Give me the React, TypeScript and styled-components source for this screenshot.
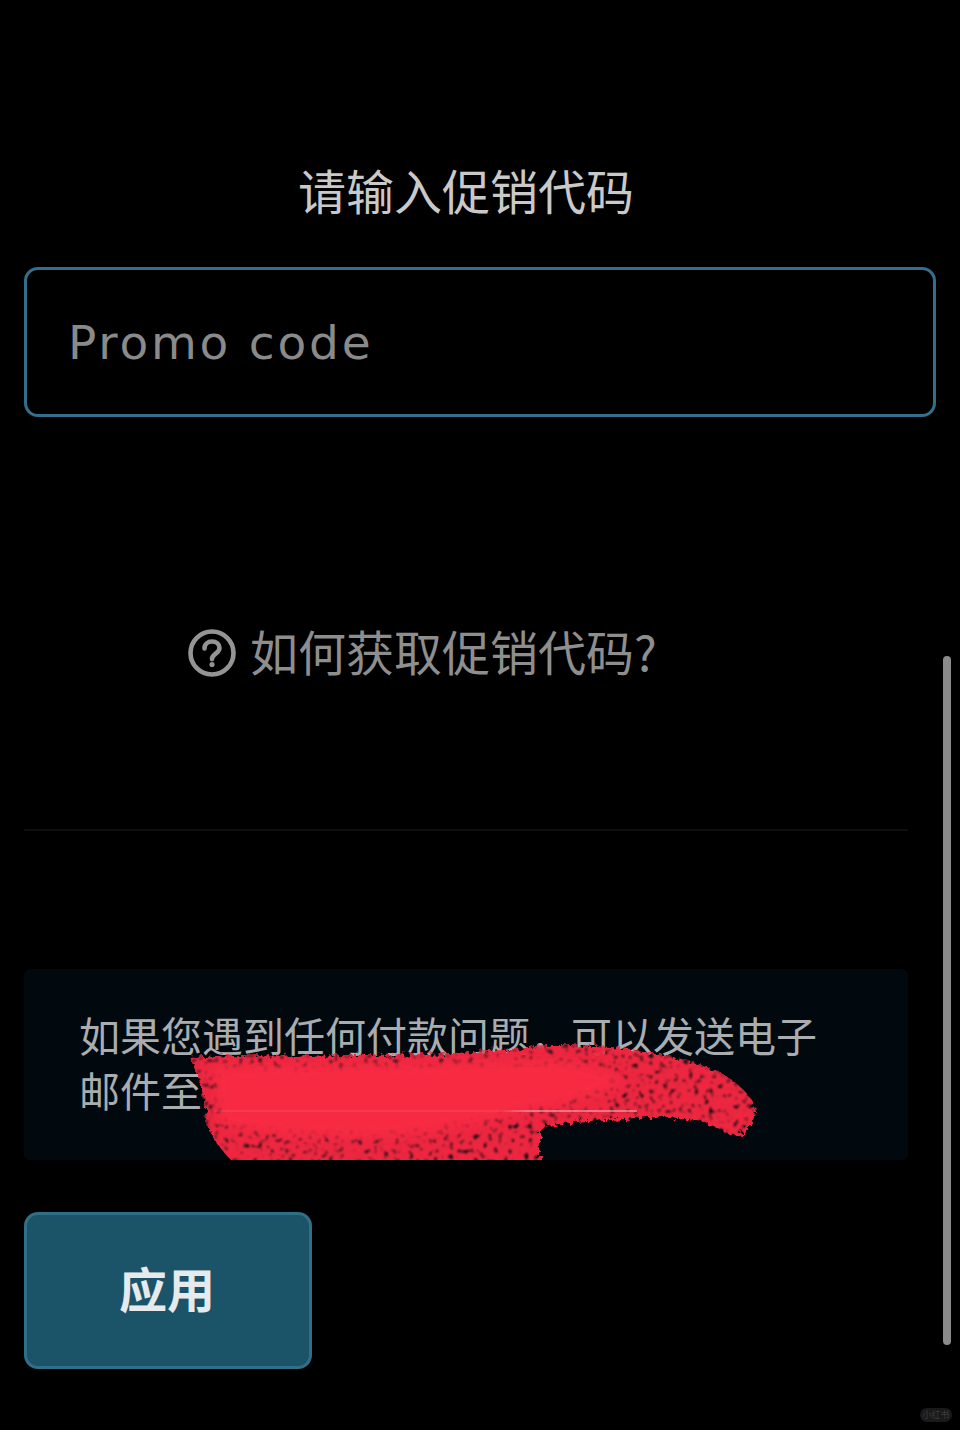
import React from 'react';
import styled, { createGlobalStyle } from 'styled-components';

const cjk = '"Noto Sans CJK SC", "Noto Sans", sans-serif';

const GlobalStyle = createGlobalStyle`
	html, body {
		margin: 0;
		background: #000;
	}
`;

const Page = styled.div`
	position: relative;
	width: 960px;
	height: 1430px;
	box-sizing: border-box;
	padding: 160px 0 0 24px;
	background: #000;
	overflow: hidden;
	font-family: ${cjk};
`;

const Column = styled.div`
	display: flex;
	flex-direction: column;
	width: 884px;
`;

const Title = styled.h1`
	margin: 0;
	height: 64px;
	font-size: 48px;
	line-height: 58px;
	font-weight: 400;
	text-align: center;
	color: #c9c9c9;
`;

const PromoInput = styled.input`
	box-sizing: border-box;
	flex: none;
	width: 912px;
	height: 150px;
	margin-top: 43px;
	padding: 0 41px;
	background: transparent;
	border: 3px solid #336f8a;
	border-radius: 14px;
	outline: none;
	font-family: "DejaVu Sans", Inter, sans-serif;
	font-size: 47px;
	font-weight: 400;
	letter-spacing: 2.8px;
	color: #8a8a8a;

	&::placeholder {
		color: #8a8a8a;
		opacity: 1;
	}
`;

const HelpRow = styled.div`
	display: flex;
	align-items: center;
	gap: 14px;
	height: 64px;
	margin-top: 204px;
	padding-left: 164px;
	font-size: 48px;
	color: #8e8e8e;
`;

const HelpText = styled.span`
	line-height: 58px;
	margin-bottom: 6px;
`;

const Divider = styled.hr`
	width: 100%;
	height: 2px;
	margin: 144px 0 0;
	border: 0;
	background: #0e0e0e;
`;

const InfoBox = styled.div`
	position: relative;
	box-sizing: border-box;
	height: 191px;
	margin-top: 138px;
	padding: 38px 0 0 55px;
	background: #01090f;
	border-radius: 6px;
	overflow: hidden;
	font-size: 41px;
	line-height: 55px;
	color: #a9adb0;
`;

// the address itself is painted out, only its underline still shows through
const MailLink = styled.span`
	position: absolute;
	z-index: 1;
	left: 191px;
	top: 141px;
	width: 422px;
	height: 2px;
	background: linear-gradient(to right, rgba(255, 190, 195, 0.1) 68%, rgba(240, 170, 180, 0.6) 74%);
`;

const Scribble = styled.svg`
	position: absolute;
	left: 0;
	top: 0;
	width: 884px;
	height: 191px;
`;

const ApplyButton = styled.button`
	box-sizing: border-box;
	width: 288px;
	height: 157px;
	margin-top: 52px;
	padding: 0 2px 8px 0;
	background: #1b5368;
	border: 3px solid #2f7088;
	border-radius: 14px;
	font-family: ${cjk};
	font-size: 48px;
	font-weight: 700;
	color: #e6eaec;
`;

const ScrollThumb = styled.div`
	position: absolute;
	left: 943px;
	top: 656px;
	width: 8px;
	height: 689px;
	border-radius: 4px;
	background: #8a8a8a;
`;

const Watermark = styled.div`
	position: absolute;
	left: 920px;
	top: 1408px;
	width: 32px;
	height: 14px;
	border-radius: 7px;
	background: #1a1a1a;
	font-size: 9px;
	line-height: 14px;
	text-align: center;
	color: #3c3c3c;
`;

const HelpIcon = () => (
	<svg width="48" height="48" viewBox="0 0 48 48" fill="none" stroke="#949494" strokeWidth="4.6">
		<circle cx="24" cy="24" r="21.5" />
		<path d="M16.5 19.5c0-4.4 3.3-7 7.5-7s7.5 2.6 7.5 6.6c0 5.6-7.5 5.6-7.5 11" strokeLinecap="round" />
		<circle cx="24" cy="35.5" r="2.6" fill="#949494" stroke="none" />
	</svg>
);

// redaction brush stroke over the e-mail address
const RedactionStroke = () => (
	<Scribble viewBox="0 0 884 191">
		<defs>
			<filter id="brush" x="-5%" y="-20%" width="110%" height="140%">
				<feTurbulence type="fractalNoise" baseFrequency="0.2" numOctaves="3" seed="11" result="noise" />
				<feDisplacementMap in="SourceGraphic" in2="noise" scale="12" result="rough" />
				<feColorMatrix
					in="noise"
					type="matrix"
					values="0 0 0 0 0  0 0 0 0 0  0 0 0 0 0  0 0 0 -6 4.6"
					result="specks"
				/>
				<feGaussianBlur in="specks" stdDeviation="0.9" result="softSpecks" />
				<feComposite in="rough" in2="softSpecks" operator="in" />
			</filter>
			<filter id="core" x="-10%" y="-30%" width="120%" height="160%">
				<feGaussianBlur stdDeviation="5" />
			</filter>
		</defs>
		<path
			d="M166 88 C200 84 260 88 323 86 C390 86 470 84 529 76 C570 76 610 78 646 88 C672 94 690 100 700 106 C716 116 726 126 730 136 C734 150 722 168 708 167 C690 156 680 152 660 150 C640 146 620 148 600 150 C570 152 535 152 516 160 L516 196 L212 196 C196 180 184 166 182 146 C180 126 176 108 166 88 Z"
			fill="#ee2840"
			filter="url(#brush)"
		/>
		<path
			d="M188 98 L330 96 C400 96 470 92 530 92 C570 96 590 104 600 112 C570 130 530 138 490 144 C470 154 420 160 380 166 C320 170 260 168 198 156 Z"
			fill="#f72c43"
			filter="url(#core)"
		/>
	</Scribble>
);

export default function App() {
	return (
		<Page>
			<GlobalStyle />
			<Column>
				<Title>请输入促销代码</Title>
				<PromoInput placeholder="Promo code" readOnly />
				<HelpRow>
					<HelpIcon />
					<HelpText>如何获取促销代码?</HelpText>
				</HelpRow>
				<Divider />
				<InfoBox>
					如果您遇到任何付款问题{'\uFF0C'}可以发送电子
					<br />
					邮件至
					<MailLink />
					<RedactionStroke />
				</InfoBox>
				<div>
					<ApplyButton>应用</ApplyButton>
				</div>
			</Column>
			<ScrollThumb />
			<Watermark>小红书</Watermark>
		</Page>
	);
}
